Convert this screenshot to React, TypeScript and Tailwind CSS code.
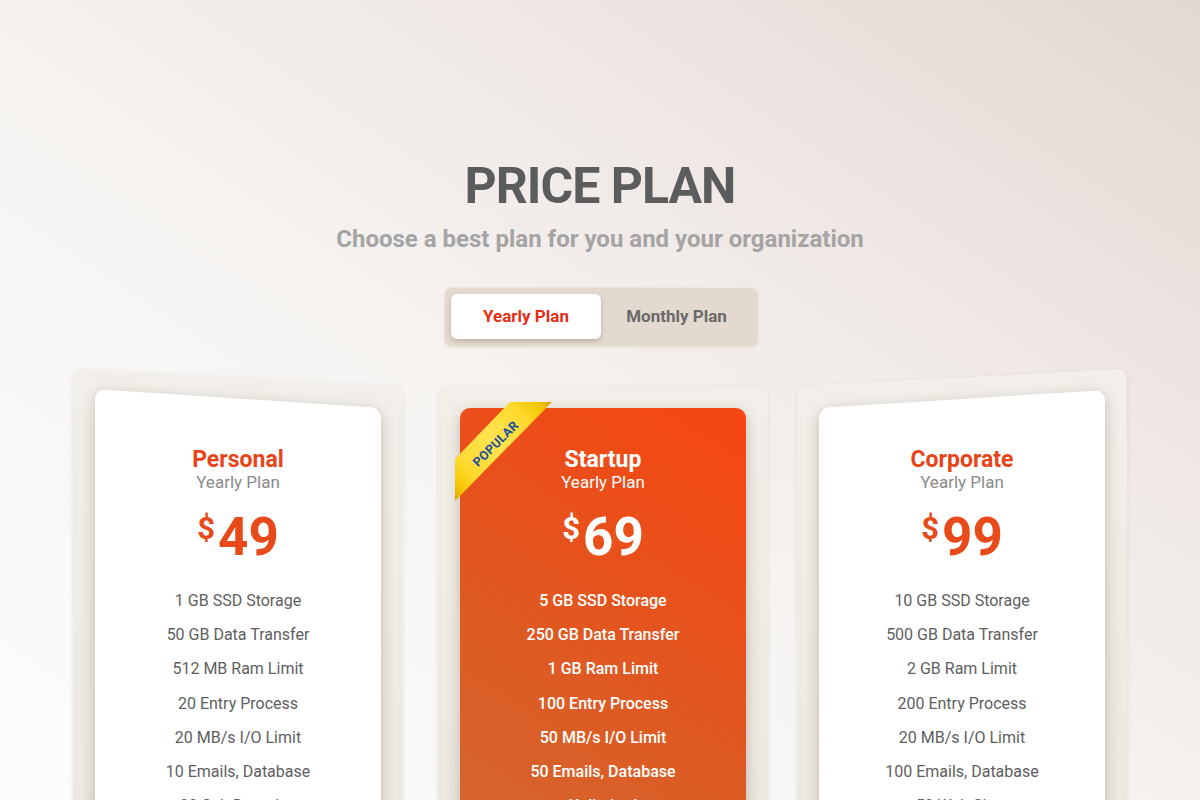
import React from "react";

type Plan = {
  name: string;
  price: string;
  side: "left" | "center" | "right";
  featured?: boolean;
  features: string[];
};

const plans: Plan[] = [
  {
    name: "Personal",
    price: "49",
    side: "left",
    features: [
      "1 GB SSD Storage",
      "50 GB Data Transfer",
      "512 MB Ram Limit",
      "20 Entry Process",
      "20 MB/s I/O Limit",
      "10 Emails, Database",
      "20 Sub Domains",
    ],
  },
  {
    name: "Startup",
    price: "69",
    side: "center",
    featured: true,
    features: [
      "5 GB SSD Storage",
      "250 GB Data Transfer",
      "1 GB Ram Limit",
      "100 Entry Process",
      "50 MB/s I/O Limit",
      "50 Emails, Database",
      "Unlimited",
    ],
  },
  {
    name: "Corporate",
    price: "99",
    side: "right",
    features: [
      "10 GB SSD Storage",
      "500 GB Data Transfer",
      "2 GB Ram Limit",
      "200 Entry Process",
      "20 MB/s I/O Limit",
      "100 Emails, Database",
      "50 Web Sites",
    ],
  },
];

function Ribbon() {
  return (
    <div className="absolute left-[-5px] top-[-6px] w-[97px] h-[99px] z-10">
      <div className="absolute inset-0 [clip-path:polygon(55px_0,97px_0,0_99px,0_57px)] bg-[linear-gradient(to_top_right,#d9a000_0%,#f3c400_8%,#ffd92c_22%,#ffe24e_50%,#ffd92c_78%,#f3c400_92%,#d9a000_100%)]" />
      <div className="absolute left-[41px] top-[42px] -translate-x-1/2 -translate-y-1/2 -rotate-45 whitespace-nowrap text-[12.5px] leading-none font-bold tracking-[0.3px] text-[#1a4ea0]">
        POPULAR
      </div>
    </div>
  );
}

function Card({ plan }: { plan: Plan }) {
  const featured = !!plan.featured;
  const backSkew =
    plan.side === "left"
      ? "origin-top-right skew-y-[3deg]"
      : plan.side === "right"
      ? "origin-top-left -skew-y-[3deg]"
      : "";
  const cardSkew =
    plan.side === "left"
      ? "origin-top-right skew-y-[3.8deg]"
      : plan.side === "right"
      ? "origin-top-left -skew-y-[3.6deg]"
      : "";
  const cardBg = featured
    ? "bg-[linear-gradient(212deg,#f64613_0%,#e9501a_35%,#dc5c25_65%,#d3672f_100%)]"
    : "bg-white";
  const extra = plan.side === "center" ? "ml-[3px] mr-[-3px]" : "";

  return (
    <div className={`relative w-[330px] h-[470px] px-[22px] pt-[22px] shrink-0 ${extra}`}>
      <div
        className={`absolute inset-0 rounded-[10px] bg-[linear-gradient(to_bottom,#f2efea,#ebe7e0)] shadow-[0_1px_4px_rgba(60,40,20,0.10)] ${backSkew}`}
      />
      <div className="relative h-[448px]">
        <div
          className={`absolute inset-0 rounded-[10px] ${cardBg} shadow-[0_4px_14px_rgba(90,70,50,0.30)] ${cardSkew}`}
        />
        {featured && <Ribbon />}
        <div className="relative flex flex-col items-center pt-[40px]">
          <div
            className={`text-[23px] leading-[24px] font-bold ${
              featured ? "text-white" : "text-[#e8441a]"
            }`}
          >
            {plan.name}
          </div>
          <div
            className={`text-[17px] leading-[20px] ${
              featured ? "text-white" : "text-[#8a8a8a]"
            }`}
          >
            Yearly Plan
          </div>
          <div
            className={`mt-[19px] flex items-start font-bold ${
              featured ? "text-white" : "text-[#e84a19]"
            }`}
          >
            <span className="text-[31px] leading-none mt-[2px] mr-[3px]">$</span>
            <span className="text-[53px] leading-none">{plan.price}</span>
          </div>
          <ul className="mt-[20px] flex flex-col items-center">
            {plan.features.map((f) => (
              <li
                key={f}
                className={`text-[16px] leading-[34.2px] ${
                  featured ? "text-white font-medium" : "text-[#5e5e5e]"
                }`}
              >
                {f}
              </li>
            ))}
          </ul>
        </div>
      </div>
    </div>
  );
}

export default function App() {
  return (
    <div className="h-[800px] w-full overflow-hidden bg-[linear-gradient(to_top_right,#fdfcfc_0%,#f7f5f3_40%,#efe8e5_70%,#e3d8d3_100%)] font-[Roboto,Arial,sans-serif] flex flex-col items-center">
      <h1 className="mt-[161px] text-[50px] leading-none font-bold tracking-[-1px] text-[#5c5c5c]">
        PRICE PLAN
      </h1>
      <p className="mt-[16px] text-[24px] leading-none font-bold text-[#a4a4a4]">
        Choose a best plan for you and your organization
      </p>
      <div className="mt-[36px] ml-[3px] flex rounded-[8px] bg-[#e3d9ce] border border-[#ece5dd] pl-[6px] pr-[6px] pt-[6px] pb-[7px] shadow-[0_1px_2px_rgba(0,0,0,0.06)]">
        <button className="w-[150px] h-[45px] rounded-[6px] bg-white shadow-[0_2px_4px_rgba(80,60,40,0.25)] text-[17px] font-bold text-[#e62e14]">
          Yearly Plan
        </button>
        <button className="w-[151px] h-[45px] text-[17px] font-bold text-[#6a6a6a]">
          Monthly Plan
        </button>
      </div>
      <div className="mt-[39px] flex gap-[32px]">
        {plans.map((p) => (
          <Card key={p.name} plan={p} />
        ))}
      </div>
    </div>
  );
}
